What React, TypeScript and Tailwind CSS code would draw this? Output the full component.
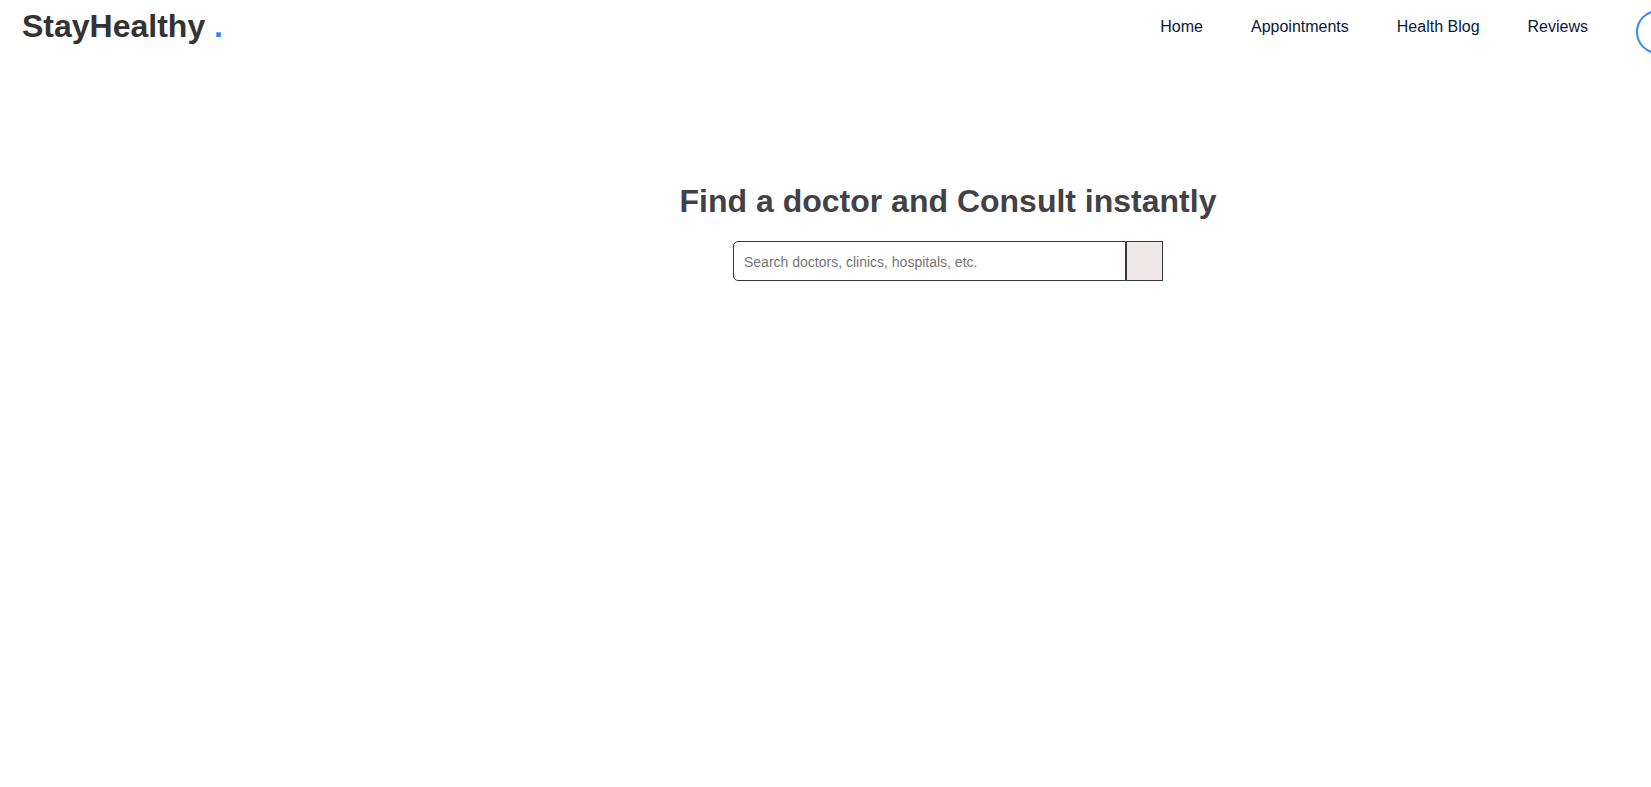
const links = [
  { label: "Home", href: "#home" },
  { label: "Appointments", href: "#appointments" },
  { label: "Health Blog", href: "#blog" },
  { label: "Reviews", href: "#reviews" },
];

function Header() {
  return (
    <header className="flex items-start justify-between overflow-hidden pt-2 pl-[22px]">
      <a href="#home" className="text-[32px] leading-9 font-bold text-[#333333]">
        StayHealthy <span className="text-[#3685fb]">.</span>
      </a>
      <nav aria-label="Main" className="-mr-[85px] flex shrink-0 items-start pt-0.5">
        <ul className="flex items-start gap-12 pr-12">
          {links.map((link) => (
            <li key={link.label}>
              <a href={link.href} className="block text-base leading-[34px] text-[#08183a]">
                {link.label}
              </a>
            </li>
          ))}
        </ul>
        <button
          type="button"
          aria-label="Sign up"
          className="h-11 w-[100px] rounded-full border-2 border-[#3685fb] bg-white"
        />
      </nav>
    </header>
  );
}

function DoctorSearch() {
  return (
    <main className="flex flex-col items-center pt-[127px] pl-[245px]">
      <h1 className="text-[32px] leading-10 font-bold text-[#424146]">
        Find a doctor and Consult instantly
      </h1>
      <form
        role="search"
        onSubmit={(event) => event.preventDefault()}
        className="mt-5 flex h-10"
      >
        <input
          type="text"
          aria-label="Search doctors, clinics, hospitals"
          placeholder="Search doctors, clinics, hospitals, etc."
          className="w-[393px] rounded-l-[5px] border border-[#35383b] bg-white px-2.5 pt-0.5 text-sm text-[#333333] outline-none placeholder:text-[#757575]"
        />
        <button
          type="submit"
          aria-label="Search"
          className="w-[37px] border border-[#35383b] bg-[#eee9e8]"
        />
      </form>
    </main>
  );
}

export default function App() {
  return (
    <div className="min-h-screen bg-white font-['Liberation_Sans',Arial,sans-serif]">
      <Header />
      <DoctorSearch />
    </div>
  );
}
